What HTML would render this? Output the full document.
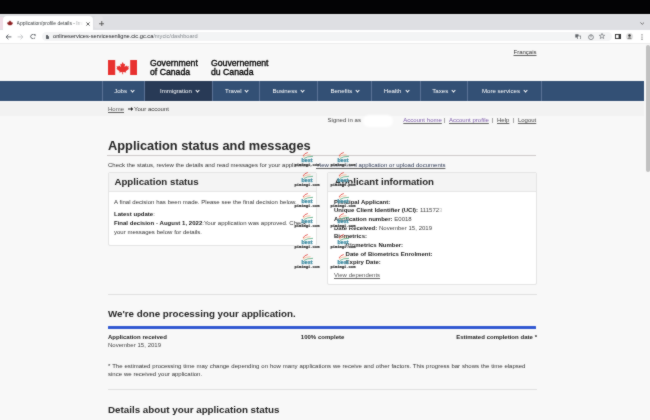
<!DOCTYPE html>
<html><head><meta charset="utf-8">
<style>
*{margin:0;padding:0;box-sizing:border-box}
html,body{width:650px;height:420px;overflow:hidden;background:#f8f8f8;font-family:"Liberation Sans",sans-serif;color:#333}
.a{position:absolute;white-space:nowrap;line-height:1}
#blk{position:absolute;left:0;top:0;width:650px;height:13.9px;background:#030305}
#tabs{position:absolute;left:0;top:14px;width:650px;height:15.7px;background:#dedfe3;border-top:1.5px solid #e7e7e9}
#tab{position:absolute;left:3px;top:16px;width:90px;height:13.7px;background:#fff;border-radius:4px 4px 0 0}
#tool{position:absolute;left:0;top:29.5px;width:650px;height:14px;background:#fff;border-bottom:0.5px solid #ececec}
#omni{position:absolute;left:42px;top:32px;width:570px;height:9.2px;background:#f3f4f5;border-radius:5px}
#page{position:absolute;left:0;top:43.5px;width:650px;height:377px;background:#f8f8f8}
#sb{position:absolute;left:645.6px;top:45px;width:4px;height:127px;background:#c1c1c1;border-radius:2px}
#nav{position:absolute;left:0;top:81px;width:644px;height:20px;background:#335075}
.ni{position:absolute;top:81px;height:20px;width:0.8px;background:#5b7296}
.nt{position:absolute;top:87.9px;font-size:6.1px;color:#fff;line-height:1;white-space:nowrap}
.chev{position:absolute;top:89.1px;width:3.1px;height:3.1px;border-right:1.3px solid #fff;border-bottom:1.3px solid #fff;transform:rotate(45deg)}
.s6{font-size:6px;word-spacing:0.15px}
.b{font-weight:700}
.u{text-decoration:underline;text-underline-offset:0.8px;text-decoration-thickness:0.5px;text-decoration-color:rgba(50,50,50,0.75);text-decoration-skip-ink:none}
.panel{position:absolute;background:#fff;border:0.7px solid #e4e4e4;border-radius:2px;overflow:hidden}
.ph{position:absolute;left:0;top:0;right:0;height:18.6px;background:#f4f4f4;border-bottom:0.7px solid #e6e6e6}
.gov{color:#000;-webkit-text-stroke:0.32px #000}
</style></head><body><svg width="0" height="0" style="position:absolute"><filter id="bl" x="0" y="0" width="650" height="420" filterUnits="userSpaceOnUse" color-interpolation-filters="sRGB"><feConvolveMatrix order="3" kernelMatrix="1 2 1 2 20 2 1 2 1" divisor="32" edgeMode="duplicate"/></filter></svg><div id="root" style="position:absolute;left:0;top:0;width:650px;height:420px;overflow:hidden;filter:url(#bl)">
<div id="blk"></div>
<div id="tabs"></div>
<div id="tab"></div>
<div class="a" style="left:0;top:16.5px;width:2.5px;height:12.5px;background:#efdde6"></div>
<div class="a" style="left:93.5px;top:15.8px;width:9.5px;height:12.7px;background:#e4e4e7;border-radius:3px"></div>
<div id="tool"></div>
<div id="omni"></div>
<div id="page"></div>
<div id="sb"></div>

<!-- tab content -->
<svg class="a" style="left:7.3px;top:20.2px" width="6" height="6" viewBox="0 0 6 6">
<path d="M3 0.3 L3.6 1.4 L4.2 1.1 L4 2.6 L4.9 2 L5.1 2.6 L5.9 2.5 L5.5 3.5 L5.9 3.8 L4.3 4.9 L4.4 5.3 L3.15 5.1 L3.15 6 L2.85 6 L2.85 5.1 L1.6 5.3 L1.7 4.9 L0.1 3.8 L0.5 3.5 L0.1 2.5 L0.9 2.6 L1.1 2 L2 2.6 L1.8 1.1 L2.4 1.4 Z" fill="#8e1f22"/>
</svg>
<div class="a" style="left:16.6px;top:20.9px;font-size:5px;color:#3c4043;-webkit-mask-image:linear-gradient(90deg,#000 85%,transparent 100%);width:66px;overflow:hidden">Application/profile details - Immigration</div>
<svg class="a" style="left:85.8px;top:21.5px" width="4" height="4" viewBox="0 0 4 4"><path d="M0.4 0.4 L3.6 3.6 M3.6 0.4 L0.4 3.6" stroke="#444" stroke-width="0.8"/></svg>
<svg class="a" style="left:98.8px;top:20.7px" width="5.5" height="5.5" viewBox="0 0 5.5 5.5"><path d="M2.75 0 V5.5 M0 2.75 H5.5" stroke="#3a3a3a" stroke-width="0.75"/></svg>
<svg class="a" style="left:639.6px;top:22px" width="4.5" height="3" viewBox="0 0 4.5 3"><path d="M0.4 0.5 L2.25 2.3 L4.1 0.5" stroke="#555" stroke-width="0.8" fill="none"/></svg>

<!-- toolbar icons -->
<svg class="a" style="left:5px;top:33.7px" width="7" height="6" viewBox="0 0 7 6"><path d="M6.4 2.9 H1.1 M3.4 0.6 L1 2.9 L3.4 5.2" stroke="#5f6368" stroke-width="0.95" fill="none"/></svg>
<svg class="a" style="left:17px;top:33.7px" width="7" height="6" viewBox="0 0 7 6"><path d="M0.6 2.9 H5.9 M3.6 0.6 L6 2.9 L3.6 5.2" stroke="#c6c8ca" stroke-width="0.95" fill="none"/></svg>
<svg class="a" style="left:29.6px;top:33.9px" width="6" height="5.5" viewBox="0 0 6 5.5"><path d="M5 1.3 A2.3 2.3 0 1 0 5.1 3.6" stroke="#5f6368" stroke-width="0.95" fill="none"/><path d="M3.6 0.2 L5.6 0.2 L5.6 2.2 Z" fill="#5f6368"/></svg>
<div class="a" style="left:45.8px;top:36.1px;width:3px;height:3.1px;background:#5f6368;border-radius:0.4px"></div>
<div class="a" style="left:46.3px;top:34.9px;width:2px;height:2px;border:0.6px solid #5f6368;border-bottom:none;border-radius:1px 1px 0 0"></div>
<div class="a" style="left:53px;top:34.4px;font-size:5.67px;color:#202124">onlineservices-servicesenligne.cic.gc.ca<span style="color:#80868b">/mycic/dashboard</span></div>
<!-- right toolbar icons -->
<svg class="a" style="left:575px;top:33.6px" width="6" height="5.5" viewBox="0 0 6 5.5"><rect x="0.3" y="0.3" width="3.2" height="3.2" fill="#5f6368"/><rect x="2.5" y="2" width="3.2" height="3.2" fill="#fff" stroke="#5f6368" stroke-width="0.6"/></svg>
<svg class="a" style="left:587.7px;top:33.5px" width="6" height="6" viewBox="0 0 6 6"><circle cx="3" cy="3.2" r="2.4" stroke="#5f6368" stroke-width="0.7" fill="none"/><path d="M3 0.6 V3.4" stroke="#5f6368" stroke-width="0.7"/></svg>
<svg class="a" style="left:599.2px;top:33.3px" width="6" height="6" viewBox="0 0 6 6"><path d="M3 0.4 L3.75 2.2 L5.7 2.3 L4.2 3.5 L4.7 5.5 L3 4.4 L1.3 5.5 L1.8 3.5 L0.3 2.3 L2.25 2.2 Z" stroke="#5f6368" stroke-width="0.6" fill="none"/></svg>
<svg class="a" style="left:614.6px;top:33.8px" width="6" height="5" viewBox="0 0 6 5"><rect x="0.45" y="0.45" width="5.1" height="4.1" stroke="#333" stroke-width="0.9" fill="none"/><rect x="3.6" y="0.45" width="1.95" height="4.1" fill="#333"/></svg>
<svg class="a" style="left:625.8px;top:32.8px" width="7" height="7" viewBox="0 0 7 7"><circle cx="3.5" cy="3.5" r="3.5" fill="#e1e1e1"/><circle cx="3.5" cy="2.5" r="1.25" fill="#333"/><path d="M1.2 5.6 Q3.5 3.2 5.8 5.6 Z" fill="#333"/></svg>
<svg class="a" style="left:641px;top:33.5px" width="2" height="6" viewBox="0 0 2 6"><circle cx="1" cy="0.8" r="0.6" fill="#444"/><circle cx="1" cy="3" r="0.6" fill="#444"/><circle cx="1" cy="5.2" r="0.6" fill="#444"/></svg>

<!-- page header -->
<div class="a s6 u" style="left:513.5px;top:48.5px;color:#333">Français</div>
<svg class="a" style="left:108px;top:60px" width="29.4" height="15" viewBox="0 0 29.4 15">
<rect x="0" y="0" width="7.2" height="15" fill="#e8312f"/>
<rect x="22.2" y="0" width="7.2" height="15" fill="#e8312f"/>
<path d="M14.7 1.9 L15.9 4.3 L17.1 3.7 L16.6 7 L18.4 5.5 L19 6.6 L20.9 6.3 L20.2 8.3 L21.1 8.8 L17.8 11.3 L18.2 12.5 L15.1 12 L15.1 14.2 L14.3 14.2 L14.3 12 L11.2 12.5 L11.6 11.3 L8.3 8.8 L9.2 8.3 L8.5 6.3 L10.4 6.6 L11 5.5 L12.8 7 L12.3 3.7 L13.5 4.3 Z" fill="#e8312f"/>
</svg>
<div class="a gov" style="left:150px;top:59.2px;font-size:8.7px;line-height:8.6px">Government<br>of Canada</div>
<div class="a gov" style="left:211px;top:59.2px;font-size:8.7px;line-height:8.6px">Gouvernement<br>du Canada</div>

<div class="a" style="left:0;top:101.5px;width:644px;height:14.5px;background:#f2f2f2"></div>
<!-- nav -->
<div id="nav"></div>
<div class="a" style="left:145px;top:81px;width:67.3px;height:20px;background:#283a56"></div>
<div class="ni" style="left:102px"></div>
<div class="ni" style="left:144.4px"></div>
<div class="ni" style="left:212px"></div>
<div class="ni" style="left:259.3px"></div>
<div class="ni" style="left:317px"></div>
<div class="ni" style="left:371.4px"></div>
<div class="ni" style="left:420px"></div>
<div class="ni" style="left:466.7px"></div>
<div class="ni" style="left:541.3px"></div>
<div class="nt" style="left:114.2px">Jobs</div><div class="chev" style="left:131px"></div>
<div class="nt" style="left:160px">Immigration</div><div class="chev" style="left:195.5px"></div>
<div class="nt" style="left:225px">Travel</div><div class="chev" style="left:244.5px"></div>
<div class="nt" style="left:272.5px">Business</div><div class="chev" style="left:301.2px"></div>
<div class="nt" style="left:330.4px">Benefits</div><div class="chev" style="left:355.8px"></div>
<div class="nt" style="left:383.8px">Health</div><div class="chev" style="left:405.5px"></div>
<div class="nt" style="left:432.3px">Taxes</div><div class="chev" style="left:451.5px"></div>
<div class="nt" style="left:482px">More services</div><div class="chev" style="left:523.5px"></div>

<!-- breadcrumb -->
<div class="a s6 u" style="left:108px;top:106.2px;color:#555">Home</div>
<svg class="a" style="left:127.6px;top:107.4px" width="5.4" height="4" viewBox="0 0 5.4 4"><path d="M0 1.4 H3 V0 L5.4 2 L3 4 V2.6 H0 Z" fill="#222"/></svg>
<div class="a s6" style="left:134px;top:106.2px;color:#333">Your account</div>

<!-- signed in -->
<div class="a s6" style="left:327.6px;top:117.3px;color:#444">Signed in as</div>
<div class="a" style="left:362.5px;top:114.5px;width:30px;height:12.5px;background:#fff;border-radius:7px;filter:blur(1px)"></div>
<div class="a s6 u" style="left:403.3px;top:117.3px;color:#7b59a8">Account home</div>
<div class="a s6" style="left:443.6px;top:117.3px;color:#555">|</div>
<div class="a s6 u" style="left:449px;top:117.3px;color:#7b59a8">Account profile</div>
<div class="a s6" style="left:491.6px;top:117.3px;color:#555">|</div>
<div class="a s6 u" style="left:497px;top:117.3px;color:#444">Help</div>
<div class="a s6" style="left:512.8px;top:117.3px;color:#555">|</div>
<div class="a s6 u" style="left:517.9px;top:117.3px;color:#444">Logout</div>

<!-- h1 -->
<div class="a b" style="left:108px;top:139.8px;font-size:12.8px;color:#262626">Application status and messages</div>
<div class="a" style="left:107px;top:155px;width:429px;height:1.4px;background:#cfcaca"></div>
<div class="a s6" style="left:108px;top:162px;color:#333">Check the status, review the details and read messages for your application.</div>
<div class="a s6 u" style="left:316px;top:162px;color:#2a3550">View submitted application or upload documents</div>

<!-- panels -->
<div class="panel" style="left:107.5px;top:172.3px;width:209.5px;height:73.7px"><div class="ph"></div></div>
<div class="a b" style="left:114.4px;top:177px;font-size:9.72px;color:#262626">Application status</div>
<div class="a s6" style="left:114px;top:198.8px;color:#333">A final decision has been made. Please see the final decision below.</div>
<div class="a s6" style="left:114px;top:210.8px;color:#333"><b style="color:#222">Latest update</b>:</div>
<div class="a s6" style="left:114px;top:218.6px;color:#333;line-height:9px"><b style="color:#222">Final decision - August 1, 2022</b>:Your application was approved. Check<br>your messages below for details.</div>

<div class="panel" style="left:327px;top:172.3px;width:209.5px;height:113.2px"><div class="ph"></div></div>
<div class="a b" style="left:334.5px;top:177px;font-size:9.65px;color:#262626">Applicant information</div>
<div class="a s6" style="left:334px;top:197.7px;color:#444;line-height:8.64px">
<b style="color:#222">Principal Applicant:</b><br>
<b style="color:#222">Unique Client Identifier (UCI):</b> 111572<span style="opacity:0.35">3</span><br>
<b style="color:#222">Application number:</b> E0018<br>
<b style="color:#222">Date Received:</b> November 15, 2019<br>
<b style="color:#222">Biometrics:</b><br>
<b style="color:#222;padding-left:11.6px">Biometrics Number:</b><br>
<b style="color:#222;padding-left:11.6px">Date of Biometrics Enrolment:</b><br>
<b style="color:#222;padding-left:11.6px">Expiry Date:</b></div>
<div class="a s6 u" style="left:334px;top:272px;color:#555">View dependents</div>

<!-- done processing -->
<div class="a" style="left:108px;top:294px;width:428.5px;height:1px;background:#e0e0e0"></div>
<div class="a b" style="left:108px;top:309.1px;font-size:9.78px;color:#262626">We're done processing your application.</div>
<div class="a" style="left:108px;top:325.9px;width:428.3px;height:2.8px;background:#3259d2;border-radius:0.5px"></div>
<div class="a s6 b" style="left:108px;top:333.8px;color:#222">Application received</div>
<div class="a s6 b" style="left:300.8px;top:333.8px;color:#222">100% complete</div>
<div class="a s6 b" style="left:456.2px;top:333.8px;color:#222">Estimated completion date *</div>
<div class="a s6" style="left:108px;top:342.3px;color:#444">November 15, 2019</div>
<div class="a s6" style="left:108px;top:361.8px;color:#333;line-height:8.6px;word-spacing:0.25px">* The estimated processing time may change depending on how many applications we receive and other factors. This progress bar shows the time elapsed<br>since we received your application.</div>
<div class="a" style="left:108px;top:389.3px;width:428.5px;height:1px;background:#e0e0e0"></div>
<div class="a b" style="left:108px;top:405.2px;font-size:9.8px;color:#262626">Details about your application status</div>

<svg class="a" style="left:294.3px;top:151.0px;overflow:visible" width="26" height="16" viewBox="0 0 26 16">
<rect x="0.2" y="12.2" width="25.6" height="3.6" fill="#fff" opacity="0.55"/>
<rect x="7.5" y="6.6" width="11.4" height="4.4" fill="#fff" opacity="0.35"/>
<path d="M9 5 Q10.4 2.2 13.8 1.5" stroke="#e04a45" stroke-width="1" fill="none" opacity="0.85"/>
<path d="M9 6.3 Q11 3.9 16.5 3.8" stroke="#f3b08a" stroke-width="1.1" fill="none" opacity="0.75"/>
<path d="M10 7.4 Q13 5.4 19 5.3" stroke="#5eae86" stroke-width="1" fill="none" opacity="0.85"/>
<text x="7.6" y="10.8" font-family="Liberation Sans" font-weight="700" font-size="5.2" fill="#3b8aa0" stroke="#3b8aa0" stroke-width="0.25" textLength="11" lengthAdjust="spacingAndGlyphs">best</text>
<text x="0.6" y="15.3" font-family="Liberation Mono" font-weight="700" font-size="4.2" fill="#1a1a1a" stroke="#1a1a1a" stroke-width="0.15" textLength="24.8" lengthAdjust="spacingAndGlyphs">pimimgi.com</text>
</svg>
<svg class="a" style="left:330.2px;top:151.0px;overflow:visible" width="26" height="16" viewBox="0 0 26 16">
<rect x="0.2" y="12.2" width="25.6" height="3.6" fill="#fff" opacity="0.55"/>
<rect x="7.5" y="6.6" width="11.4" height="4.4" fill="#fff" opacity="0.35"/>
<path d="M9 5 Q10.4 2.2 13.8 1.5" stroke="#e04a45" stroke-width="1" fill="none" opacity="0.85"/>
<path d="M9 6.3 Q11 3.9 16.5 3.8" stroke="#f3b08a" stroke-width="1.1" fill="none" opacity="0.75"/>
<path d="M10 7.4 Q13 5.4 19 5.3" stroke="#5eae86" stroke-width="1" fill="none" opacity="0.85"/>
<text x="7.6" y="10.8" font-family="Liberation Sans" font-weight="700" font-size="5.2" fill="#3b8aa0" stroke="#3b8aa0" stroke-width="0.25" textLength="11" lengthAdjust="spacingAndGlyphs">best</text>
<text x="0.6" y="15.3" font-family="Liberation Mono" font-weight="700" font-size="4.2" fill="#1a1a1a" stroke="#1a1a1a" stroke-width="0.15" textLength="24.8" lengthAdjust="spacingAndGlyphs">pimimgi.com</text>
</svg>
<svg class="a" style="left:294.3px;top:171.4px;overflow:visible" width="26" height="16" viewBox="0 0 26 16">
<rect x="0.2" y="12.2" width="25.6" height="3.6" fill="#fff" opacity="0.55"/>
<rect x="7.5" y="6.6" width="11.4" height="4.4" fill="#fff" opacity="0.35"/>
<path d="M9 5 Q10.4 2.2 13.8 1.5" stroke="#e04a45" stroke-width="1" fill="none" opacity="0.85"/>
<path d="M9 6.3 Q11 3.9 16.5 3.8" stroke="#f3b08a" stroke-width="1.1" fill="none" opacity="0.75"/>
<path d="M10 7.4 Q13 5.4 19 5.3" stroke="#5eae86" stroke-width="1" fill="none" opacity="0.85"/>
<text x="7.6" y="10.8" font-family="Liberation Sans" font-weight="700" font-size="5.2" fill="#3b8aa0" stroke="#3b8aa0" stroke-width="0.25" textLength="11" lengthAdjust="spacingAndGlyphs">best</text>
<text x="0.6" y="15.3" font-family="Liberation Mono" font-weight="700" font-size="4.2" fill="#1a1a1a" stroke="#1a1a1a" stroke-width="0.15" textLength="24.8" lengthAdjust="spacingAndGlyphs">pimimgi.com</text>
</svg>
<svg class="a" style="left:330.2px;top:171.4px;overflow:visible" width="26" height="16" viewBox="0 0 26 16">
<rect x="0.2" y="12.2" width="25.6" height="3.6" fill="#fff" opacity="0.55"/>
<rect x="7.5" y="6.6" width="11.4" height="4.4" fill="#fff" opacity="0.35"/>
<path d="M9 5 Q10.4 2.2 13.8 1.5" stroke="#e04a45" stroke-width="1" fill="none" opacity="0.85"/>
<path d="M9 6.3 Q11 3.9 16.5 3.8" stroke="#f3b08a" stroke-width="1.1" fill="none" opacity="0.75"/>
<path d="M10 7.4 Q13 5.4 19 5.3" stroke="#5eae86" stroke-width="1" fill="none" opacity="0.85"/>
<text x="7.6" y="10.8" font-family="Liberation Sans" font-weight="700" font-size="5.2" fill="#3b8aa0" stroke="#3b8aa0" stroke-width="0.25" textLength="11" lengthAdjust="spacingAndGlyphs">best</text>
<text x="0.6" y="15.3" font-family="Liberation Mono" font-weight="700" font-size="4.2" fill="#1a1a1a" stroke="#1a1a1a" stroke-width="0.15" textLength="24.8" lengthAdjust="spacingAndGlyphs">pimimgi.com</text>
</svg>
<svg class="a" style="left:294.3px;top:191.8px;overflow:visible" width="26" height="16" viewBox="0 0 26 16">
<rect x="0.2" y="12.2" width="25.6" height="3.6" fill="#fff" opacity="0.55"/>
<rect x="7.5" y="6.6" width="11.4" height="4.4" fill="#fff" opacity="0.35"/>
<path d="M9 5 Q10.4 2.2 13.8 1.5" stroke="#e04a45" stroke-width="1" fill="none" opacity="0.85"/>
<path d="M9 6.3 Q11 3.9 16.5 3.8" stroke="#f3b08a" stroke-width="1.1" fill="none" opacity="0.75"/>
<path d="M10 7.4 Q13 5.4 19 5.3" stroke="#5eae86" stroke-width="1" fill="none" opacity="0.85"/>
<text x="7.6" y="10.8" font-family="Liberation Sans" font-weight="700" font-size="5.2" fill="#3b8aa0" stroke="#3b8aa0" stroke-width="0.25" textLength="11" lengthAdjust="spacingAndGlyphs">best</text>
<text x="0.6" y="15.3" font-family="Liberation Mono" font-weight="700" font-size="4.2" fill="#1a1a1a" stroke="#1a1a1a" stroke-width="0.15" textLength="24.8" lengthAdjust="spacingAndGlyphs">pimimgi.com</text>
</svg>
<svg class="a" style="left:330.2px;top:191.8px;overflow:visible" width="26" height="16" viewBox="0 0 26 16">
<rect x="0.2" y="12.2" width="25.6" height="3.6" fill="#fff" opacity="0.55"/>
<rect x="7.5" y="6.6" width="11.4" height="4.4" fill="#fff" opacity="0.35"/>
<path d="M9 5 Q10.4 2.2 13.8 1.5" stroke="#e04a45" stroke-width="1" fill="none" opacity="0.85"/>
<path d="M9 6.3 Q11 3.9 16.5 3.8" stroke="#f3b08a" stroke-width="1.1" fill="none" opacity="0.75"/>
<path d="M10 7.4 Q13 5.4 19 5.3" stroke="#5eae86" stroke-width="1" fill="none" opacity="0.85"/>
<text x="7.6" y="10.8" font-family="Liberation Sans" font-weight="700" font-size="5.2" fill="#3b8aa0" stroke="#3b8aa0" stroke-width="0.25" textLength="11" lengthAdjust="spacingAndGlyphs">best</text>
<text x="0.6" y="15.3" font-family="Liberation Mono" font-weight="700" font-size="4.2" fill="#1a1a1a" stroke="#1a1a1a" stroke-width="0.15" textLength="24.8" lengthAdjust="spacingAndGlyphs">pimimgi.com</text>
</svg>
<svg class="a" style="left:294.3px;top:212.2px;overflow:visible" width="26" height="16" viewBox="0 0 26 16">
<rect x="0.2" y="12.2" width="25.6" height="3.6" fill="#fff" opacity="0.55"/>
<rect x="7.5" y="6.6" width="11.4" height="4.4" fill="#fff" opacity="0.35"/>
<path d="M9 5 Q10.4 2.2 13.8 1.5" stroke="#e04a45" stroke-width="1" fill="none" opacity="0.85"/>
<path d="M9 6.3 Q11 3.9 16.5 3.8" stroke="#f3b08a" stroke-width="1.1" fill="none" opacity="0.75"/>
<path d="M10 7.4 Q13 5.4 19 5.3" stroke="#5eae86" stroke-width="1" fill="none" opacity="0.85"/>
<text x="7.6" y="10.8" font-family="Liberation Sans" font-weight="700" font-size="5.2" fill="#3b8aa0" stroke="#3b8aa0" stroke-width="0.25" textLength="11" lengthAdjust="spacingAndGlyphs">best</text>
<text x="0.6" y="15.3" font-family="Liberation Mono" font-weight="700" font-size="4.2" fill="#1a1a1a" stroke="#1a1a1a" stroke-width="0.15" textLength="24.8" lengthAdjust="spacingAndGlyphs">pimimgi.com</text>
</svg>
<svg class="a" style="left:330.2px;top:212.2px;overflow:visible" width="26" height="16" viewBox="0 0 26 16">
<rect x="0.2" y="12.2" width="25.6" height="3.6" fill="#fff" opacity="0.55"/>
<rect x="7.5" y="6.6" width="11.4" height="4.4" fill="#fff" opacity="0.35"/>
<path d="M9 5 Q10.4 2.2 13.8 1.5" stroke="#e04a45" stroke-width="1" fill="none" opacity="0.85"/>
<path d="M9 6.3 Q11 3.9 16.5 3.8" stroke="#f3b08a" stroke-width="1.1" fill="none" opacity="0.75"/>
<path d="M10 7.4 Q13 5.4 19 5.3" stroke="#5eae86" stroke-width="1" fill="none" opacity="0.85"/>
<text x="7.6" y="10.8" font-family="Liberation Sans" font-weight="700" font-size="5.2" fill="#3b8aa0" stroke="#3b8aa0" stroke-width="0.25" textLength="11" lengthAdjust="spacingAndGlyphs">best</text>
<text x="0.6" y="15.3" font-family="Liberation Mono" font-weight="700" font-size="4.2" fill="#1a1a1a" stroke="#1a1a1a" stroke-width="0.15" textLength="24.8" lengthAdjust="spacingAndGlyphs">pimimgi.com</text>
</svg>
<svg class="a" style="left:294.3px;top:232.6px;overflow:visible" width="26" height="16" viewBox="0 0 26 16">
<rect x="0.2" y="12.2" width="25.6" height="3.6" fill="#fff" opacity="0.55"/>
<rect x="7.5" y="6.6" width="11.4" height="4.4" fill="#fff" opacity="0.35"/>
<path d="M9 5 Q10.4 2.2 13.8 1.5" stroke="#e04a45" stroke-width="1" fill="none" opacity="0.85"/>
<path d="M9 6.3 Q11 3.9 16.5 3.8" stroke="#f3b08a" stroke-width="1.1" fill="none" opacity="0.75"/>
<path d="M10 7.4 Q13 5.4 19 5.3" stroke="#5eae86" stroke-width="1" fill="none" opacity="0.85"/>
<text x="7.6" y="10.8" font-family="Liberation Sans" font-weight="700" font-size="5.2" fill="#3b8aa0" stroke="#3b8aa0" stroke-width="0.25" textLength="11" lengthAdjust="spacingAndGlyphs">best</text>
<text x="0.6" y="15.3" font-family="Liberation Mono" font-weight="700" font-size="4.2" fill="#1a1a1a" stroke="#1a1a1a" stroke-width="0.15" textLength="24.8" lengthAdjust="spacingAndGlyphs">pimimgi.com</text>
</svg>
<svg class="a" style="left:330.2px;top:232.6px;overflow:visible" width="26" height="16" viewBox="0 0 26 16">
<rect x="0.2" y="12.2" width="25.6" height="3.6" fill="#fff" opacity="0.55"/>
<rect x="7.5" y="6.6" width="11.4" height="4.4" fill="#fff" opacity="0.35"/>
<path d="M9 5 Q10.4 2.2 13.8 1.5" stroke="#e04a45" stroke-width="1" fill="none" opacity="0.85"/>
<path d="M9 6.3 Q11 3.9 16.5 3.8" stroke="#f3b08a" stroke-width="1.1" fill="none" opacity="0.75"/>
<path d="M10 7.4 Q13 5.4 19 5.3" stroke="#5eae86" stroke-width="1" fill="none" opacity="0.85"/>
<text x="7.6" y="10.8" font-family="Liberation Sans" font-weight="700" font-size="5.2" fill="#3b8aa0" stroke="#3b8aa0" stroke-width="0.25" textLength="11" lengthAdjust="spacingAndGlyphs">best</text>
<text x="0.6" y="15.3" font-family="Liberation Mono" font-weight="700" font-size="4.2" fill="#1a1a1a" stroke="#1a1a1a" stroke-width="0.15" textLength="24.8" lengthAdjust="spacingAndGlyphs">pimimgi.com</text>
</svg>
<svg class="a" style="left:294.3px;top:253.0px;overflow:visible" width="26" height="16" viewBox="0 0 26 16">
<rect x="0.2" y="12.2" width="25.6" height="3.6" fill="#fff" opacity="0.55"/>
<rect x="7.5" y="6.6" width="11.4" height="4.4" fill="#fff" opacity="0.35"/>
<path d="M9 5 Q10.4 2.2 13.8 1.5" stroke="#e04a45" stroke-width="1" fill="none" opacity="0.85"/>
<path d="M9 6.3 Q11 3.9 16.5 3.8" stroke="#f3b08a" stroke-width="1.1" fill="none" opacity="0.75"/>
<path d="M10 7.4 Q13 5.4 19 5.3" stroke="#5eae86" stroke-width="1" fill="none" opacity="0.85"/>
<text x="7.6" y="10.8" font-family="Liberation Sans" font-weight="700" font-size="5.2" fill="#3b8aa0" stroke="#3b8aa0" stroke-width="0.25" textLength="11" lengthAdjust="spacingAndGlyphs">best</text>
<text x="0.6" y="15.3" font-family="Liberation Mono" font-weight="700" font-size="4.2" fill="#1a1a1a" stroke="#1a1a1a" stroke-width="0.15" textLength="24.8" lengthAdjust="spacingAndGlyphs">pimimgi.com</text>
</svg>
<svg class="a" style="left:330.2px;top:253.0px;overflow:visible" width="26" height="16" viewBox="0 0 26 16">
<rect x="0.2" y="12.2" width="25.6" height="3.6" fill="#fff" opacity="0.55"/>
<rect x="7.5" y="6.6" width="11.4" height="4.4" fill="#fff" opacity="0.35"/>
<path d="M9 5 Q10.4 2.2 13.8 1.5" stroke="#e04a45" stroke-width="1" fill="none" opacity="0.85"/>
<path d="M9 6.3 Q11 3.9 16.5 3.8" stroke="#f3b08a" stroke-width="1.1" fill="none" opacity="0.75"/>
<path d="M10 7.4 Q13 5.4 19 5.3" stroke="#5eae86" stroke-width="1" fill="none" opacity="0.85"/>
<text x="7.6" y="10.8" font-family="Liberation Sans" font-weight="700" font-size="5.2" fill="#3b8aa0" stroke="#3b8aa0" stroke-width="0.25" textLength="11" lengthAdjust="spacingAndGlyphs">best</text>
<text x="0.6" y="15.3" font-family="Liberation Mono" font-weight="700" font-size="4.2" fill="#1a1a1a" stroke="#1a1a1a" stroke-width="0.15" textLength="24.8" lengthAdjust="spacingAndGlyphs">pimimgi.com</text>
</svg>
</div></body></html>
